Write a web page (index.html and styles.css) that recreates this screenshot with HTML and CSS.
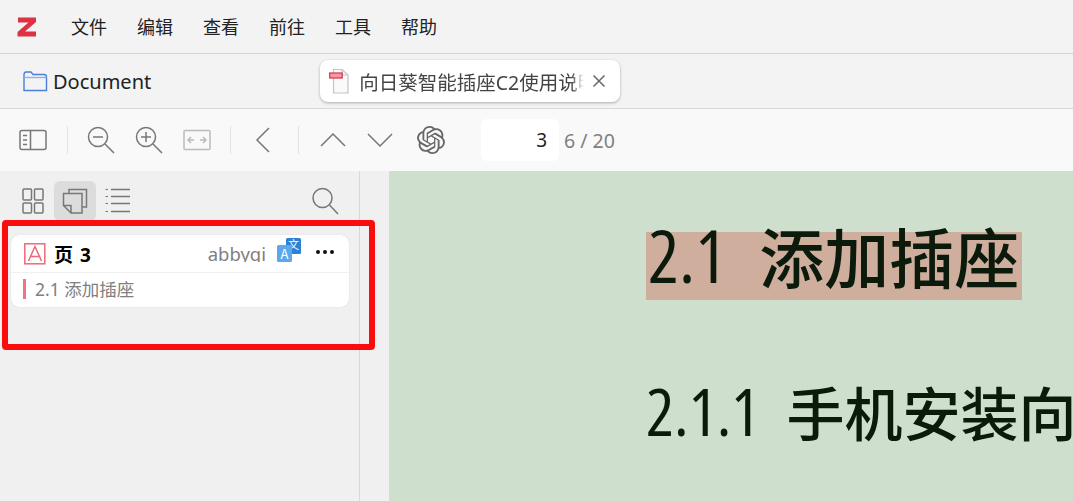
FILE: index.html
```html
<!DOCTYPE html>
<html lang="zh-CN">
<head>
    <meta charset="UTF-8">
    <meta name="viewport" content="width=device-width, initial-scale=1.0">
    <title>Document</title>
    <link rel="stylesheet" href="styles.css">
</head>
<body>
  <header class="menubar">
    <svg class="logo" width="20" height="20" viewBox="0 0 20 20"><path d="M1 .5H19V5L8 14.500H19V19.500H.5V15L11.500 5.500H1Z" fill="#dc3244"/></svg>
    <nav class="menu">
      <a>文件</a><a>编辑</a><a>查看</a><a>前往</a><a>工具</a><a>帮助</a>
    </nav>
  </header>

  <div class="tabbar">
    <div class="library">
      <svg width="26" height="22" viewBox="0 0 26 22" fill="none" stroke="#4a7fdc" stroke-width="1.400"><path d="M2 20.500V5Q2 2 4 2H9L11 4.500H22Q24.500 4.500 24.500 7V20.500Z"/><path d="M2 7.500H24.500" stroke="#8fb0e8"/></svg>
      <span>Document</span>
    </div>
    <div class="tab">
      <svg width="20" height="26" viewBox="0 0 20 26" fill="none"><path d="M4.500 1.500H13L19 7V25H4.500Z" fill="#fafafa" stroke="#c4c4c4" stroke-width="1.200"/><path d="M13 1.500V7H19" stroke="#c4c4c4" stroke-width="1.200"/><rect x=".7" y="5" width="12.500" height="5" fill="#f29aa8" stroke="#dc3244" stroke-width="1.200"/></svg>
      <span class="tab-title">向日葵智能插座C2使用说明书</span>
      <svg class="tab-close" width="14" height="14" viewBox="0 0 14 14" stroke="#666" stroke-width="1.500"><path d="M1.500 1.500 12.500 12.500M12.500 1.500 1.500 12.500"/></svg>
    </div>
  </div>

  <div class="toolbar">
    <svg class="tool" width="28" height="22" viewBox="0 0 28 22" fill="none" stroke="#777" stroke-width="1.500"><rect x="1" y="1.500" width="26" height="19" rx="2"/><path d="M11.500 1.500V20.500"/><path d="M4 6.500H8M4 11H8M4 15.500H8"/></svg>
    <i class="sep first"></i>
    <svg class="tool" width="28" height="28" viewBox="0 0 28 28" fill="none" stroke="#777" stroke-width="1.500"><circle cx="11" cy="11" r="9.500"/><path d="M6 11H16M18 18 27 27"/></svg>
    <svg class="tool zoom-in" width="28" height="28" viewBox="0 0 28 28" fill="none" stroke="#777" stroke-width="1.500"><circle cx="11" cy="11" r="9.500"/><path d="M6 11H16M11 6V16M18 18 27 27"/></svg>
    <svg class="tool fit" width="28" height="22" viewBox="0 0 28 22" fill="none" stroke="#bbb" stroke-width="1.500"><rect x="1" y="1.500" width="26" height="19" rx="1"/><path d="M5 11H11M8 8 5 11 8 14M17 11H23M20 8 23 11 20 14"/></svg>
    <i class="sep"></i>
    <svg class="tool prev" width="16" height="26" viewBox="0 0 16 26" fill="none" stroke="#777" stroke-width="1.500"><path d="M14 1 2 13 14 25"/></svg>
    <i class="sep"></i>
    <svg class="tool up" width="26" height="14" viewBox="0 0 26 14" fill="none" stroke="#777" stroke-width="1.500"><path d="M1 13 13 1 25 13"/></svg>
    <svg class="tool down" width="26" height="14" viewBox="0 0 26 14" fill="none" stroke="#777" stroke-width="1.500"><path d="M1 1 13 13 25 1"/></svg>
    <svg class="tool gpt" width="28" height="28" viewBox="0 0 24 24" fill="#666"><path d="M22.280 9.820a5.980 5.980 0 0 0-.520-4.910 6.050 6.050 0 0 0-6.510-2.900A6.070 6.070 0 0 0 4.980 4.180a5.980 5.980 0 0 0-4 2.900 6.050 6.050 0 0 0 .740 7.100 5.980 5.980 0 0 0 .510 4.910 6.050 6.050 0 0 0 6.520 2.900A5.980 5.980 0 0 0 13.260 24a6.060 6.060 0 0 0 5.770-4.210 5.990 5.990 0 0 0 4-2.900 6.060 6.060 0 0 0-.750-7.070zM13.260 22.430a4.480 4.480 0 0 1-2.880-1.040l.140-.080 4.780-2.760a.790.790 0 0 0 .390-.680v-6.740l2.020 1.170a.070.070 0 0 1 .040.050v5.580a4.500 4.500 0 0 1-4.490 4.500zM3.600 18.300a4.470 4.470 0 0 1-.530-3.010l.140.080 4.780 2.760a.770.770 0 0 0 .780 0l5.840-3.370v2.330a.080.080 0 0 1-.030.060l-4.830 2.790a4.500 4.500 0 0 1-6.140-1.640zM2.340 7.900a4.490 4.490 0 0 1 2.370-1.970v5.680a.770.770 0 0 0 .390.680l5.810 3.350-2.020 1.170a.080.080 0 0 1-.070 0L4 14.020A4.500 4.500 0 0 1 2.340 7.870zm16.600 3.860-5.830-3.390 2.020-1.160a.080.080 0 0 1 .070 0l4.830 2.790a4.490 4.490 0 0 1-.680 8.100v-5.680a.790.790 0 0 0-.410-.660zm2.010-3.020-.140-.090-4.770-2.780a.780.780 0 0 0-.790 0L9.410 9.230V6.900a.070.070 0 0 1 .030-.060l4.830-2.790a4.500 4.500 0 0 1 6.680 4.660zM8.310 12.860 6.290 11.700a.080.080 0 0 1-.040-.060V6.080a4.500 4.500 0 0 1 7.380-3.450l-.140.080L8.700 5.470a.790.790 0 0 0-.390.680zm1.100-2.370 2.600-1.500 2.610 1.500v3L12 15l-2.600-1.500z"/></svg>
    <div class="page-input">3</div>
    <span class="page-count">6 / 20</span>
  </div>

  <main class="content">
    <aside class="sidebar">
      <div class="side-tools">
        <svg class="side-icon" width="22" height="26" viewBox="0 0 22 26" fill="none" stroke="#777" stroke-width="1.500"><rect x="1" y="1" width="8.500" height="11" rx="1"/><rect x="12.500" y="1" width="8.500" height="11" rx="1"/><rect x="1" y="15" width="8.500" height="10" rx="1"/><rect x="12.500" y="15" width="8.500" height="10" rx="1"/></svg>
        <div class="side-active">
          <svg width="26" height="26" viewBox="0 0 26 26" fill="none" stroke="#777" stroke-width="1.500"><path d="M7 5V1.500H24.500V19H20"/><path d="M1.500 5.500H20V25H9L1.500 17.500Z"/><path d="M1.500 17.500H9V25"/></svg>
        </div>
        <svg class="side-icon list" width="26" height="26" viewBox="0 0 26 26" fill="none" stroke="#777" stroke-width="1.500"><path d="M6 1.500H25M6 8.500H25M6 15.500H25M6 23.500H25"/><path d="M.5 1.500H3M.5 8.500H3M.5 15.500H3M.5 23.500H3" stroke-width="1"/></svg>
        <svg class="side-search" width="28" height="28" viewBox="0 0 28 28" fill="none" stroke="#777" stroke-width="1.500"><circle cx="11.500" cy="11" r="9.500"/><path d="M18.500 18 27 27"/></svg>
      </div>

      <section class="note-card">
        <div class="note-head">
          <svg class="note-type" width="22" height="22" viewBox="0 0 22 22" fill="none" stroke="#ee6a78" stroke-width="1.500"><rect x=".8" y=".8" width="20" height="20"/><path d="M4.500 18 11 3.500 17.500 18M6.500 13.500H15.500"/></svg>
          <b class="note-page">页 3</b>
          <span class="note-author">abbyqi</span>
          <svg class="note-trans" width="26" height="26" viewBox="0 0 26 26"><rect x="10" y="0" width="15" height="16" rx="1.500" fill="#2a83d6"/><text x="17.500" y="11" font-size="11" fill="#fff" text-anchor="middle" class="trans-text">文</text><rect x="1" y="7" width="15" height="17" rx="1.500" fill="#5aa9ec"/><text x="8.500" y="21" font-size="13" fill="#fff" text-anchor="middle" class="trans-text">A</text></svg>
          <span class="note-more"><i></i><i></i><i></i></span>
        </div>
        <div class="note-body"><span>2.1 添加插座</span></div>
      </section>
      <div class="callout"></div>
    </aside>

    <div class="gutter"></div>

    <article class="page">
      <h1><mark><span class="num">2.1</span><span class="cjk">添加插座</span></mark></h1>
      <h2><span class="num">2.1.1</span><span class="cjk">手机安装向导</span></h2>
    </article>
  </main>
</body>
</html>
```

FILE: styles.css
```css
* {
    box-sizing: border-box;
}
html, body {
    margin: 0;
    height: 100%;
}
body {
    display: flex;
    flex-direction: column;
    overflow: hidden;
    font-family: "Noto Sans", "Noto Sans CJK SC", sans-serif;
    background-color: #f0f0f0;
    color: #222;
}
svg {
    display: block;
    flex: none;
}

.menubar {
    display: flex;
    align-items: center;
    height: 54px;
    padding-left: 17px;
    border-bottom: 1px solid #d4d4d4;
    background-color: #f3f3f3;
}
.menu {
    display: flex;
    gap: 30px;
    margin-left: 34px;
    margin-top: -2px;
    font-size: 18px;
}

.tabbar {
    position: relative;
    display: flex;
    align-items: center;
    height: 55px;
    padding-left: 22px;
    border-bottom: 1px solid #d8d8d8;
    background-color: #f3f3f3;
}
.library {
    display: flex;
    align-items: center;
    gap: 5px;
    font-size: 20px;
}
.tab {
    display: flex;
    align-items: center;
    width: 300px;
    height: 42px;
    margin-left: 169px;
    padding-left: 9px;
    border-radius: 8px;
    background-color: #fff;
    box-shadow: 0 1px 3px rgba(0, 0, 0, .3);
}
.tab-title {
    width: 226px;
    margin-left: 10px;
    overflow: hidden;
    white-space: nowrap;
    font-size: 19.5px;
    color: #444;
    -webkit-mask-image: linear-gradient(to right, #000 212px, transparent 225px);
    mask-image: linear-gradient(to right, #000 212px, transparent 225px);
}
.tab-close {
    margin-left: 7px;
}

.toolbar {
    display: flex;
    align-items: center;
    height: 62px;
    padding-left: 19px;
    background-color: #f9f9f9;
}
.sep {
    width: 1px;
    height: 28px;
    margin: 0 19px;
    background-color: #e4e4e4;
}
.sep.first {
    margin: 0 19px 0 20px;
}
.zoom-in {
    margin-left: 20px;
}
.fit {
    margin-left: 20px;
}
.prev {
    margin-left: 5px;
    margin-right: 8px;
}
.up {
    margin-left: 2px;
}
.down {
    margin-left: 21px;
}
.gpt {
    margin-left: 24px;
}
.page-input {
    width: 78px;
    height: 42px;
    margin-left: 36px;
    padding-right: 12px;
    border-radius: 6px;
    background-color: #fff;
    text-align: right;
    font-size: 19px;
    line-height: 42px;
}
.page-count {
    margin-left: 5px;
    font-size: 19.5px;
    color: #808080;
}

.content {
    position: relative;
    display: flex;
    flex: 1;
    min-height: 0;
}
.sidebar {
    position: relative;
    width: 360px;
    padding: 9px 10px 0 11px;
    border-right: 1px solid #d8d8d8;
    background-color: #f0f0f0;
}
.side-tools {
    display: flex;
    align-items: center;
    height: 42px;
    padding-left: 11px;
    margin-bottom: 13px;
}
.side-active {
    display: flex;
    align-items: center;
    justify-content: center;
    width: 42px;
    height: 40px;
    margin-left: 10px;
    border-radius: 6px;
    background-color: #dcdcdc;
}
.list {
    margin-left: 9px;
}
.side-search {
    margin-left: auto;
    margin-right: 10px;
}

.note-card {
    width: 338px;
    height: 72px;
    border-radius: 8px;
    background-color: #fff;
    box-shadow: 0 0 1px rgba(0, 0, 0, .2);
}
.note-head {
    display: flex;
    align-items: center;
    height: 38px;
    padding-left: 13px;
    border-bottom: 1px solid #f0f0f0;
}
.note-page {
    margin-left: 8px;
    font-size: 19px;
    word-spacing: 2px;
    color: #000;
}
.note-author {
    align-self: flex-start;
    height: 21px;
    margin-top: 6px;
    margin-left: auto;
    overflow: hidden;
    font-size: 18.500px;
    line-height: 26px;
    color: #808080;
}
.note-trans {
    margin-left: 10px;
    margin-top: -5px;
}
.trans-text {
    font-family: "Noto Sans CJK SC", sans-serif;
}
.note-more {
    display: flex;
    gap: 3px;
    margin: -4px 15px 0 14px;
}
.note-more i {
    width: 4px;
    height: 4px;
    border-radius: 50%;
    background-color: #111;
}
.note-body {
    height: 34px;
    padding: 6px 0 0 12px;
    font-size: 17.500px;
}
.note-body span {
    display: block;
    height: 20px;
    padding-left: 9px;
    border-left: 3px solid #f07480;
    line-height: 21px;
    color: #808080;
}

/* red box drawn over the screenshot */
.callout {
    position: absolute;
    left: 2px;
    top: 49px;
    width: 373px;
    height: 130px;
    border: 6px solid #fb0d0d;
    border-radius: 4px;
}

.gutter {
    width: 29px;
    background-color: #f0f0f0;
}
.page {
    flex: 1;
    overflow: hidden;
    padding: 61px 0 0 257px;
    background-color: #cfdfce;
    color: #0b1a0b;
    white-space: nowrap;
}
.page .num {
    font-family: "Open Sans", sans-serif;
    font-stretch: 84%;
    font-weight: 500;
}
.page .cjk {
    font-family: "Noto Sans CJK SC", sans-serif;
}
.page h1 {
    margin: 0;
    font-size: 65px;
    font-weight: 500;
}
.page h1 mark {
    display: block;
    width: 376px;
    height: 68px;
    padding-left: 2px;
    background-color: #cfae9e;
    color: inherit;
    line-height: 45px;
}
.page h1 .num {
    font-size: 73px;
}
.page h1 .cjk {
    margin-left: 33px;
}
.page h2 {
    margin: 75px 0 0;
    font-size: 58px;
    font-weight: 500;
    line-height: 70px;
}
.page h2 .num {
    font-size: 66px;
    font-stretch: 78%;
}
.page h2 .cjk {
    margin-left: 27px;
}
```
